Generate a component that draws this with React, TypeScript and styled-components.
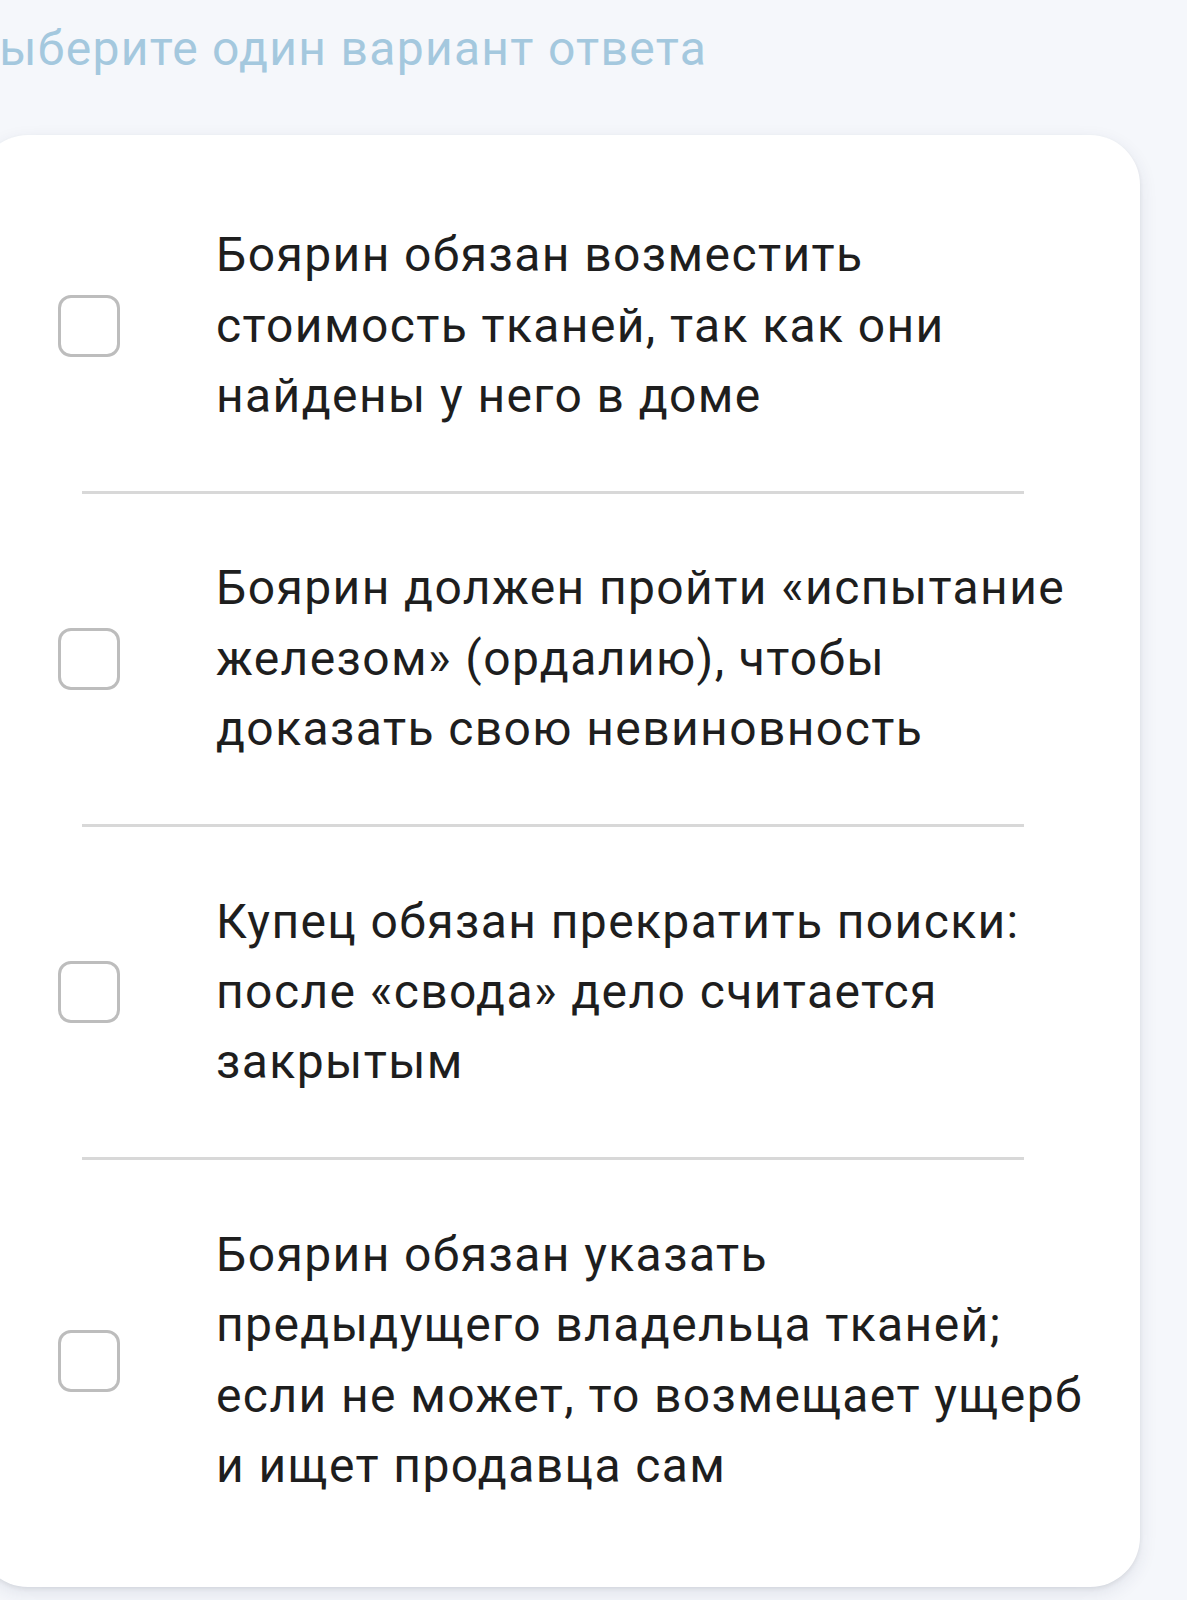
import React from "react";
import styled, { createGlobalStyle } from "styled-components";

const GlobalStyle = createGlobalStyle`
  html, body {
    margin: 0;
    padding: 0;
    background: #f5f7fb;
  }
  body {
    font-family: Roboto, "Noto Sans", "Liberation Sans", sans-serif;
    overflow: hidden;
  }
`;

const Page = styled.div`
  display: flex;
  flex-direction: column;
  padding: 20px 0 0 0;
  min-height: 1600px;
  box-sizing: border-box;
`;

const Hint = styled.h2`
  margin: 0 0 57px -32px;
  font-size: 48px;
  line-height: 1.2;
  font-weight: 400;
  letter-spacing: 1.3px;
  color: #a4c8de;
  white-space: nowrap;
`;

const Card = styled.div`
  margin-left: -22px;
  width: 1162px;
  box-sizing: border-box;
  background: #ffffff;
  border-radius: 50px;
  padding: 26px 40px 26px 80px;
  box-shadow: 0 6px 18px rgba(40, 50, 90, 0.1), 0 2px 4px rgba(0, 0, 0, 0.07);
  display: flex;
  flex-direction: column;
`;

const Option = styled.label`
  display: flex;
  align-items: center;
  gap: 96px;
  padding: 59.5px 0;
  cursor: pointer;
`;

const Box = styled.span`
  flex: 0 0 auto;
  width: 62px;
  height: 62px;
  box-sizing: border-box;
  border: 3px solid #bdbdbd;
  border-radius: 13px;
  background: #fff;
`;

const OptionText = styled.span`
  width: 880px;
  font-size: 48px;
  line-height: 70.4px;
  letter-spacing: 1.4px;
  color: #1e1e1e;
  font-weight: 400;
`;

const Divider = styled.hr`
  margin: 0 0 0 24px;
  width: 942px;
  height: 3px;
  border: none;
  background: #d8d8d8;
`;

const options = [
  "Боярин обязан возместить стоимость тканей, так как они найдены у него в доме",
  "Боярин должен пройти «испытание железом» (ордалию), чтобы доказать свою невиновность",
  "Купец обязан прекратить поиски: после «свода» дело считается закрытым",
  "Боярин обязан указать предыдущего владельца тканей; если не может, то возмещает ущерб и ищет продавца сам",
];

export default function App() {
  return (
    <>
      <GlobalStyle />
      <Page>
        <Hint>Выберите один вариант ответа</Hint>
        <Card>
          {options.map((text, i) => (
            <React.Fragment key={i}>
              {i > 0 && <Divider />}
              <Option>
                <Box />
                <OptionText>{text}</OptionText>
              </Option>
            </React.Fragment>
          ))}
        </Card>
      </Page>
    </>
  );
}
